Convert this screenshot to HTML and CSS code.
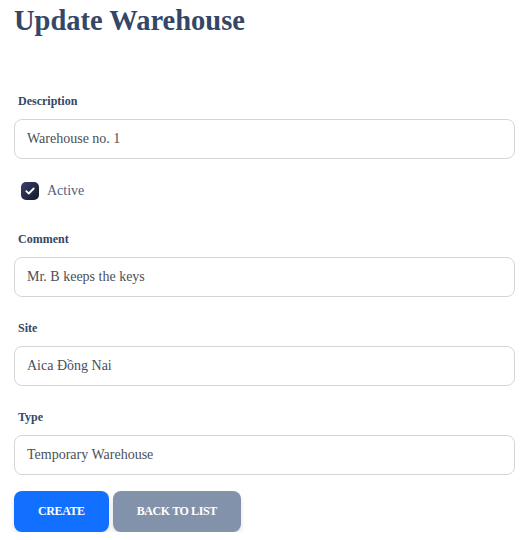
FILE: index.html
```html
<!DOCTYPE html>
<html lang="en">
<head>
<meta charset="utf-8">
<title>Update Warehouse</title>
<link rel="stylesheet" href="styles.css">
</head>
<body>
<div class="page">
  <h1 class="title">Update Warehouse</h1>
  <form class="form">
    <div class="field">
      <label class="label" for="desc">Description</label>
      <input class="control" id="desc" type="text" value="Warehouse no. 1">
    </div>
    <div class="check-row">
      <span class="checkbox"><svg width="10" height="8" viewBox="0 0 10 8"><path d="M1.3 4.2 L3.8 6.5 L8.7 1.5" fill="none" stroke="#fff" stroke-width="1.8" stroke-linecap="round" stroke-linejoin="round"/></svg></span>
      <span class="check-label">Active</span>
    </div>
    <div class="field">
      <label class="label" for="comment">Comment</label>
      <input class="control" id="comment" type="text" value="Mr. B keeps the keys">
    </div>
    <div class="field">
      <label class="label" for="site">Site</label>
      <input class="control" id="site" type="text" value="Aica Đồng Nai">
    </div>
    <div class="field">
      <label class="label" for="type">Type</label>
      <input class="control" id="type" type="text" value="Temporary Warehouse">
    </div>
    <div class="actions">
      <button type="button" class="btn btn-primary">Create</button>
      <button type="button" class="btn btn-secondary">Back to list</button>
    </div>
  </form>
</div>
</body>
</html>
```

FILE: styles.css
```css
* { box-sizing: border-box; }
html, body { margin: 0; padding: 0; background: #fff; }
body { font-family: "Liberation Serif", "Times New Roman", serif; }
.page { padding: 4px 17px 0 14px; }
.title {
  margin: 0;
  font-size: 28.5px;
  line-height: 34px;
  font-weight: 700;
  color: #344767;
}
.form { margin-top: 54px; display: flex; flex-direction: column; }
.field { display: flex; flex-direction: column; margin-bottom: 22px; }
.field:first-child { margin-bottom: 0; }
.label {
  display: block;
  margin: 0 0 9px 4px;
  font-size: 12px;
  line-height: 18px;
  font-weight: 700;
  color: #344767;
}
.control {
  width: 100%;
  height: 40px;
  margin: 0;
  padding: 0 12px;
  border: 1px solid #d2d6da;
  border-radius: 8px;
  font-family: "Liberation Serif", "Times New Roman", serif;
  font-size: 14px;
  color: #495057;
  background: #fff;
  outline: none;
}
.check-row {
  display: flex;
  align-items: center;
  gap: 8px;
  margin: 23px 0 30px 7px;
  height: 18px;
}
.checkbox {
  width: 18px;
  height: 18px;
  border-radius: 5px;
  background: linear-gradient(310deg, #141727 0%, #3a416f 100%);
  display: flex;
  align-items: center;
  justify-content: center;
}
.check-label { font-size: 14px; color: #525f7f; line-height: 18px; }
.actions { display: flex; gap: 4px; margin-top: -6px; }
.btn {
  height: 41px;
  padding: 0 24px;
  border: 0;
  border-radius: 8px;
  font-family: "Liberation Serif", "Times New Roman", serif;
  font-size: 12px;
  font-weight: 700;
  letter-spacing: -0.4px;
  text-transform: uppercase;
  color: #fff;
  box-shadow: 0 4px 7px -1px rgba(0,0,0,.11), 0 2px 4px -1px rgba(0,0,0,.07);
  cursor: pointer;
}
.btn-primary { background: #1170ff; }
.btn-secondary { background: #8392ab; }
```
